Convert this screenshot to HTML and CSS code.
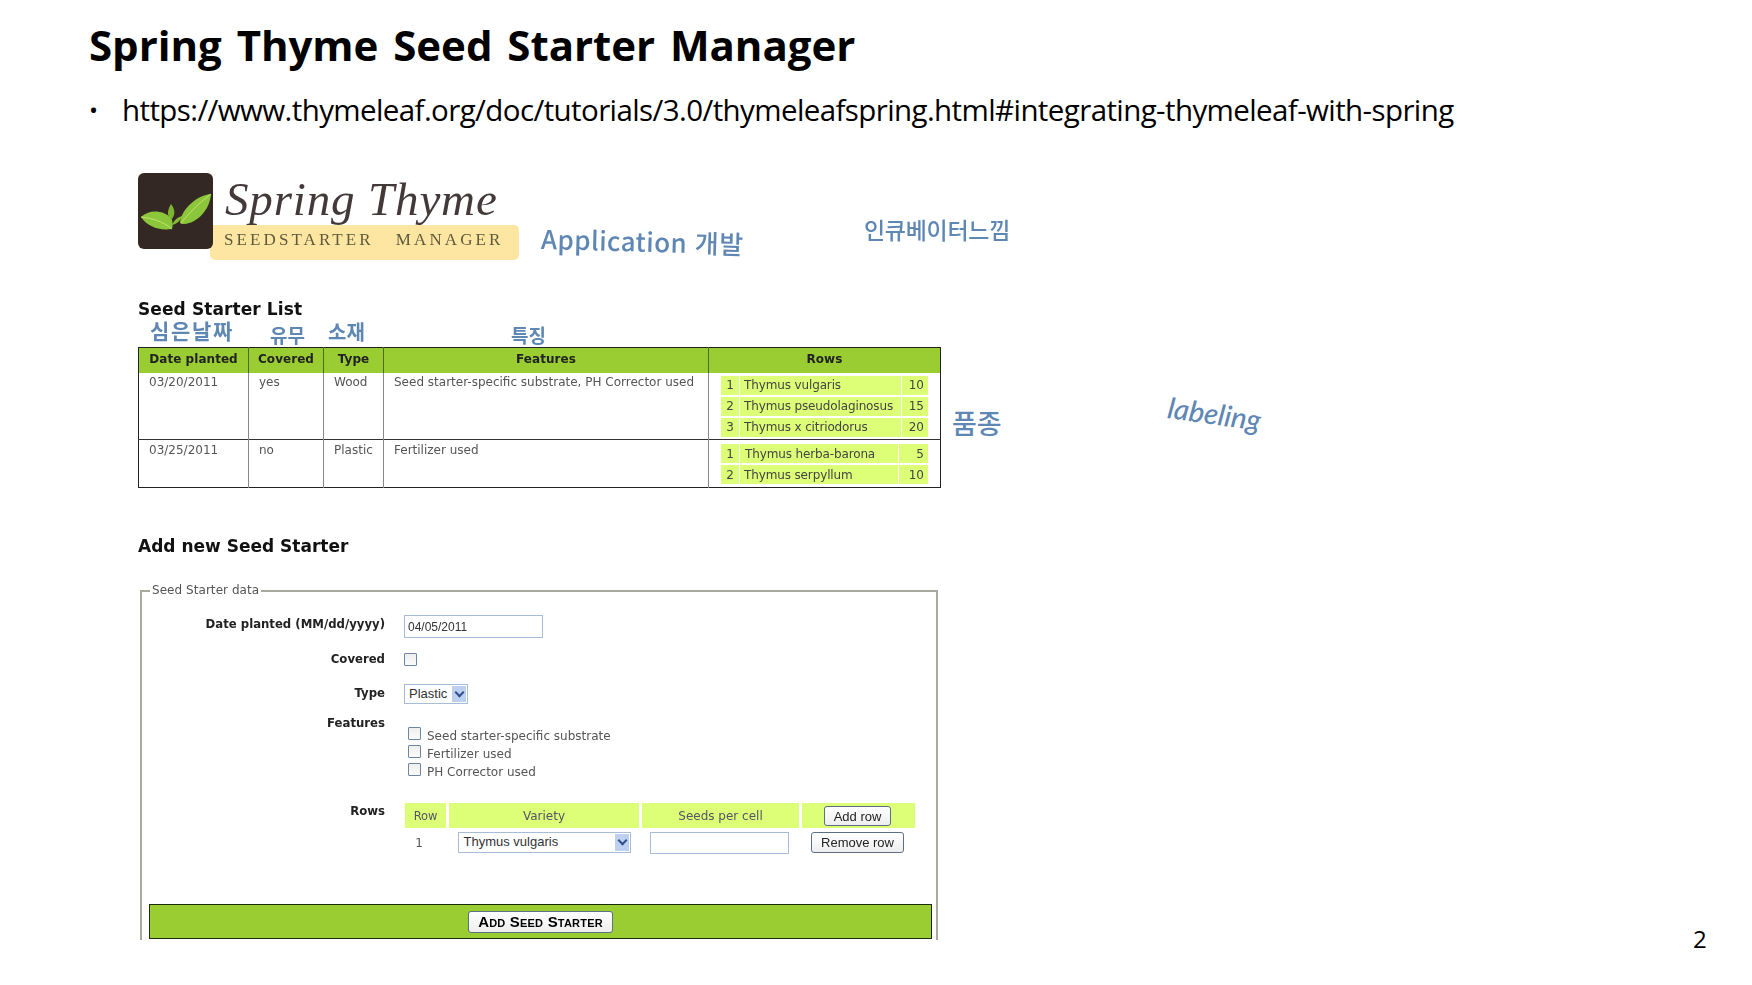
FILE: index.html
```html
<!DOCTYPE html>
<html lang="ko">
<head>
<meta charset="utf-8">
<title>Spring Thyme Seed Starter Manager</title>
<link rel="stylesheet" href="styles.css">
</head>
<body>
<main class="slide">
  <h1 class="title">Spring Thyme Seed Starter Manager</h1>
  <ul class="links"><li>https://www.thymeleaf.org/doc/tutorials/3.0/thymeleafspring.html#integrating-thymeleaf-with-spring</li></ul>

  <section class="shot">
    <div class="logo">
      <div class="logo-icon">
        <svg width="75" height="76" viewBox="0 0 75 76">
          <path d="M3 44C10 37 24 36 33 45C35 48 35 52 34 56C20 58 9 53 3 44Z" fill="#8cc63a"/>
          <path d="M3 44C14 45 26 49 34 56" fill="none" stroke="#c4e56e" stroke-width="1"/>
          <path d="M33 47C28 42 30 36 33 31C37 36 38 42 33 47Z" fill="#7db52f"/>
          <path d="M34 52C36 47 40 44 44 43C43 47 39 51 34 52Z" fill="#86bd33"/>
          <path d="M42 49C44 35 60 22 73 21C72 36 60 50 46 51C44 51 42 51 42 49Z" fill="#8cc63a"/>
          <path d="M43 50C52 39 62 29 73 21" fill="none" stroke="#bfe266" stroke-width="1"/>
        </svg>
      </div>
      <div class="logo-text">
        <div class="logo-name">Spring Thyme</div>
        <div class="logo-band">SEEDSTARTER&nbsp;&nbsp; MANAGER</div>
      </div>
    </div>

    <h2 class="list-title">Seed Starter List</h2>
    <table class="seeds">
      <thead>
        <tr><th class="c-date">Date planted</th><th class="c-cov">Covered</th><th class="c-type">Type</th><th class="c-feat">Features</th><th>Rows</th></tr>
      </thead>
      <tbody>
        <tr class="row-a">
          <td>03/20/2011</td><td>yes</td><td>Wood</td><td>Seed starter-specific substrate, PH Corrector used</td>
          <td class="rows-cell">
            <table class="sub">
              <tr><td class="n">1</td><td class="v-a">Thymus vulgaris</td><td class="q">10</td></tr>
              <tr><td class="n">2</td><td>Thymus pseudolaginosus</td><td class="q">15</td></tr>
              <tr><td class="n">3</td><td>Thymus x citriodorus</td><td class="q">20</td></tr>
            </table>
          </td>
        </tr>
        <tr class="row-b">
          <td>03/25/2011</td><td>no</td><td>Plastic</td><td>Fertilizer used</td>
          <td class="rows-cell">
            <table class="sub">
              <tr><td class="n">1</td><td class="v-b">Thymus herba-barona</td><td class="q">5</td></tr>
              <tr><td class="n">2</td><td>Thymus serpyllum</td><td class="q">10</td></tr>
            </table>
          </td>
        </tr>
      </tbody>
    </table>

    <h2 class="add-title">Add new Seed Starter</h2>
    <fieldset class="data">
      <legend>Seed Starter data</legend>
      <div class="field f-date"><label>Date planted (MM/dd/yyyy)</label><span class="input date-input">04/05/2011</span></div>
      <div class="field f-cov"><label>Covered</label><span class="check"></span></div>
      <div class="field f-type"><label>Type</label><span class="select type-select">Plastic<i class="arrow"></i></span></div>
      <div class="field f-feat"><label>Features</label>
        <ul class="feats">
          <li><span class="check"></span>Seed starter-specific substrate</li>
          <li><span class="check"></span>Fertilizer used</li>
          <li><span class="check"></span>PH Corrector used</li>
        </ul>
      </div>
      <div class="field f-rows"><label>Rows</label>
        <div class="grid">
          <div class="gh g1">Row</div><div class="gh g2">Variety</div><div class="gh g3">Seeds per cell</div><div class="gh g4"><span class="btn add">Add row</span></div>
          <div class="gc g1 num">1</div><div class="gc g2"><span class="select var-select">Thymus vulgaris<i class="arrow"></i></span></div><div class="gc g3"><span class="input seeds-input"></span></div><div class="gc g4"><span class="btn remove">Remove row</span></div>
        </div>
      </div>
      <div class="submit"><span class="btn go">Add Seed Starter</span></div>
    </fieldset>
  </section>

  <span class="note n-app">Application 개발</span>
  <span class="note n-inc">인큐베이터느낌</span>
  <span class="note n-date">심은날짜</span>
  <span class="note n-cov">유무</span>
  <span class="note n-mat">소재</span>
  <span class="note n-feat">특징</span>
  <span class="note n-var">품종</span>
  <span class="note n-lab">labeling</span>
  <span class="page">2</span>
</main>
</body>
</html>
```
FILE: styles.css
```css
* { box-sizing: border-box; }
html, body { margin: 0; padding: 0; background: #fff; }
.slide {
  position: relative;
  width: 1752px;
  height: 985px;
  overflow: hidden;
  padding: 17px 0 0 89px;
  font-family: "Open Sans", "Noto Sans CJK KR", sans-serif;
  color: #000;
}
.title {
  margin: 0;
  font-size: 42px;
  line-height: 56px;
  font-weight: 700;
  word-spacing: 4px;
  letter-spacing: -0.03px;
}
.links {
  list-style: none;
  margin: 16px 0 0;
  padding: 0;
  font-size: 29.5px;
  line-height: 42px;
  letter-spacing: -0.6px;
}
.links li { display: flex; }
.links li::before { content: "•"; flex: none; width: 33px; font-size: 24px; }

.shot {
  margin: 42px 0 0 49px;
  width: 810px;
  height: 767px;
  overflow: hidden;
  font-family: "DejaVu Sans", sans-serif;
  font-size: 12px;
  color: #444;
  filter: blur(0.45px);
}
.logo { display: flex; height: 87px; }
.logo-icon {
  position: relative;
  z-index: 1;
  flex: none;
  width: 75px;
  height: 76px;
  background: #342825;
  border-radius: 6px;
}
.logo-icon svg { display: block; }
.logo-text { margin-left: -3px; width: 309px; }
.logo-name {
  height: 52px;
  padding-left: 15px;
  font-family: "Liberation Serif", serif;
  font-style: italic;
  font-size: 47px;
  line-height: 52px;
  letter-spacing: 0.85px;
  color: #43393a;
  white-space: nowrap;
}
.logo-band {
  height: 35px;
  padding-left: 14px;
  background: #fde6a2;
  border-radius: 5px;
  font-family: "Liberation Serif", serif;
  font-size: 17px;
  line-height: 30px;
  letter-spacing: 3.1px;
  color: #5f5a3c;
  white-space: nowrap;
}
.list-title, .add-title {
  margin: 0;
  font-size: 17px;
  font-weight: 700;
  color: #111;
  line-height: 22px;
}
.list-title { margin-top: 38px; letter-spacing: 0.1px; }
.add-title { margin-top: 47px; letter-spacing: 0; }

.seeds {
  margin-top: 27px;
  width: 803px;
  table-layout: fixed;
  border-collapse: collapse;
  border: 1px solid #222;
}
.seeds > thead > tr > th {
  height: 25px;
  padding: 0 0 2px;
  background: #9acd32;
  color: #222;
  font-size: 12px;
  letter-spacing: 0.05px;
  border-right: 1px solid #4d6b19;
}
.seeds > thead > tr > th:last-child { border-right: 0; }
.c-date { width: 110px; }
.c-cov { width: 75px; }
.c-type { width: 60px; }
.c-feat { width: 325px; }
.seeds > tbody > tr > td {
  padding: 2px 0 0 10px;
  vertical-align: top;
  border-right: 1px solid #888;
  letter-spacing: 0;
  line-height: 15px;
  color: #555;
  white-space: nowrap;
}
.seeds > tbody > tr > td:last-child { border-right: 0; }
.seeds > tbody > .row-a { height: 67px; border-bottom: 1px solid #333; }
.seeds > tbody > .row-b { height: 48px; }
.seeds > tbody > .row-b > td { padding-top: 3px; }
.seeds > tbody > tr > .rows-cell { padding: 1px 0 0 11px; }
.seeds > tbody > .row-b > .rows-cell { padding-top: 2px; }
.sub { border-collapse: separate; border-spacing: 1px 2px; width: 209px; }
.sub td {
  height: 19px;
  padding: 0 4px;
  background: #ddff77;
  color: #444;
  line-height: 18px;
  letter-spacing: -0.13px;
}
.sub .n { width: 18px; text-align: center; padding: 0; }
.sub .q { text-align: right; letter-spacing: 0; }
.sub .v-a { width: 161px; }
.sub .v-b { width: 158px; padding-left: 5px; }

.data {
  margin: 26px 0 0 2px;
  padding: 0;
  width: 798px;
  height: 400px;
  border: 0 solid #aaa99f;
  border-width: 2px 2px 0 2px;
  min-inline-size: 0;
  display: block;
}
.data legend {
  margin-left: 8px;
  padding: 0 2px;
  font-size: 12px;
  line-height: 15px;
  color: #555;
  letter-spacing: 0.05px;
}
.field { display: flex; align-items: flex-start; }
.field label {
  flex: none;
  width: 243px;
  text-align: right;
  font-weight: 700;
  font-size: 11.7px;
  color: #222;
  line-height: 15px;
}
.f-date { margin-top: 18px; height: 36px; }
.f-date label { margin-top: 1px; }
.f-cov { height: 33px; }
.f-type { height: 31px; }
.f-type label { margin-top: 1px; }
.f-feat { height: 88px; }
.f-rows { height: 100px; }
.input, .select {
  display: block;
  background: #fff;
  border: 1px solid #a5bdd8;
  font-family: "Liberation Sans", sans-serif;
  color: #333;
  flex: none;
}
.date-input {
  margin-left: 19px;
  margin-top: -1px;
  width: 139px;
  height: 23px;
  padding-left: 3px;
  font-size: 12px;
  line-height: 23px;
}
.check {
  display: block;
  flex: none;
  width: 13px;
  height: 13px;
  background: linear-gradient(#eee, #fbfbfb);
  border: 1px solid #6c87a5;
  border-radius: 1px;
}
.f-cov .check { margin-left: 19px; margin-top: 1px; }
.select { position: relative; font-size: 13px; line-height: 18px; padding-left: 4px; }
.type-select { margin-left: 19px; margin-top: -1px; width: 64px; height: 20px; }
.arrow {
  position: absolute;
  right: 1px;
  top: 1px;
  bottom: 1px;
  width: 14px;
  background: #bdd0ef;
}
.arrow::after {
  content: "";
  position: absolute;
  left: 4px;
  top: 3px;
  width: 5px;
  height: 5px;
  border: solid #2f4f8f;
  border-width: 0 2px 2px 0;
  transform: rotate(45deg);
}
.feats {
  list-style: none;
  margin: 11px 0 0 23px;
  padding: 0;
  font-size: 12px;
  color: #555;
  letter-spacing: 0;
}
.feats li { display: flex; height: 18px; line-height: 18px; }
.feats .check { margin-right: 6px; }
.grid {
  margin-left: 20px;
  margin-top: -1px;
  display: grid;
  grid-template-columns: 41px 190px 157px 113px;
  grid-template-rows: 25px 27px;
  column-gap: 3px;
  font-size: 12px;
  letter-spacing: 0;
  color: #555;
}
.gh {
  display: flex;
  align-items: center;
  justify-content: center;
  background: #ddff77;
  color: #556;
}
.gc { display: flex; align-items: center; justify-content: center; }
.gh.g1 { font-size: 11.5px; letter-spacing: -0.2px; }
.num { padding-right: 13px; padding-top: 2px; }
.var-select { width: 173px; height: 21px; font-size: 13px; margin-top: 2px; padding-left: 5px; }
.seeds-input { width: 139px; height: 22px; margin-top: 2px; margin-right: 2px; }
.btn {
  display: block;
  background: linear-gradient(#fff, #eee);
  border: 1px solid #5c6f85;
  border-radius: 3px;
  font-family: "Liberation Sans", sans-serif;
  font-size: 13px;
  color: #222;
  text-align: center;
}
.add { width: 67px; height: 20px; line-height: 19px; margin-right: 2px; }
.remove { width: 93px; height: 21px; line-height: 20px; margin-top: 2px; margin-right: 2px; }
.submit {
  margin-left: 7px;
  width: 783px;
  height: 35px;
  background: #9acd32;
  border: 1px solid #1c2a0c;
  display: flex;
  align-items: center;
  padding-left: 318px;
}
.go {
  width: 145px;
  height: 22px;
  font-variant: small-caps;
  font-weight: 700;
  font-size: 15px;
  line-height: 20px;
  letter-spacing: 0.2px;
  color: #000;
}

.note {
  position: absolute;
  font-family: "Noto Sans CJK KR", sans-serif;
  font-weight: 500;
  color: #5f87b4;
  white-space: nowrap;
  line-height: 1;
  transform-origin: left center;
}
.n-app { left: 541px; top: 225px; font-size: 26px; transform: rotate(1.5deg); letter-spacing: 0.4px; }
.n-inc { left: 864px; top: 218px; font-size: 23px; letter-spacing: -0.3px; }
.n-date { left: 150px; top: 320px; font-size: 21px; letter-spacing: 1.7px; font-weight: 700; }
.n-cov { left: 270px; top: 325px; font-size: 19px; font-weight: 700; }
.n-mat { left: 328px; top: 322px; font-size: 20px; font-weight: 700; }
.n-feat { left: 511px; top: 325px; font-size: 19px; font-weight: 700; }
.n-var { left: 952px; top: 409px; font-size: 27px; }
.n-lab { left: 1168px; top: 392px; font-size: 29px; font-family: "Lato", sans-serif; font-style: italic; transform: rotate(8deg); }
.page {
  position: absolute;
  left: 1693px;
  top: 921px;
  font-size: 24px;
  line-height: 36px;
  color: #000;
}
```
